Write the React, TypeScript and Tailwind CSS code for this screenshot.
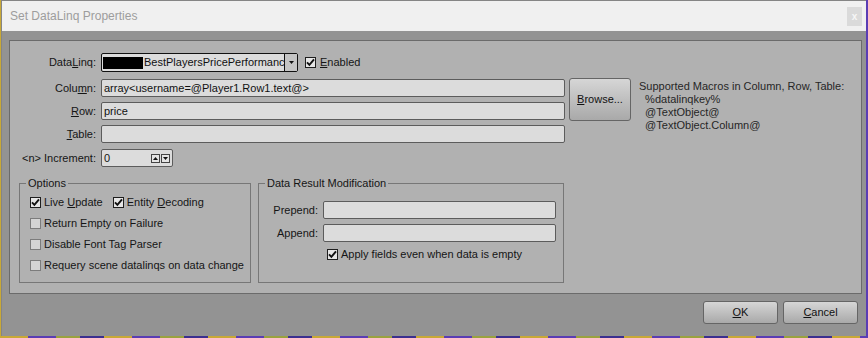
import type { ReactNode } from "react";

const font = { fontFamily: '"Liberation Sans", Arial, sans-serif' };

function Check({ checked }: { checked?: boolean }) {
  return (
    <span
      className={
        checked
          ? "w-[11px] h-[11px] shrink-0 border border-[#1e1e1e] bg-[#e6e6e6] flex items-center justify-center"
          : "w-[11px] h-[11px] shrink-0 border border-[#7c7c7c] bg-[#d4d4d4]"
      }
    >
      {checked && (
        <svg width="9" height="9" viewBox="0 0 9 9">
          <path d="M1 4.3 L3.4 6.8 L8 1.4" stroke="#111" strokeWidth="1.9" fill="none" />
        </svg>
      )}
    </span>
  );
}

function CheckRow({ checked, children }: { checked?: boolean; children: ReactNode }) {
  return (
    <div className="flex items-center gap-[3px] h-[21px]">
      <Check checked={checked} />
      <span>{children}</span>
    </div>
  );
}

function Field({ value, w }: { value?: string; w: string }) {
  return (
    <div
      className={`${w} h-[18px] bg-[#dcdcdc] border border-[#5c5c5c] rounded-[2px] px-[2px] flex items-center text-[#111]`}
    >
      {value}
    </div>
  );
}

function Label({ children, w }: { children: ReactNode; w: string }) {
  return <div className={`${w} text-right shrink-0`}>{children}</div>;
}

function Btn({ children, w, h }: { children: ReactNode; w: string; h: string }) {
  return (
    <button
      className={`${w} ${h} border border-[#656565] rounded-[3px] bg-gradient-to-b from-[#d6d6d6] to-[#a9a9a9] text-[#111] flex items-center justify-center`}
    >
      {children}
    </button>
  );
}

export default function App() {
  return (
    <div
      className="w-[868px] h-[338px] pl-[1px] bg-[repeating-linear-gradient(90deg,#c9a936_0px,#c9a936_28px,#5a3db4_28px,#5a3db4_56px,#9aa23f_56px,#9aa23f_80px,#3b2f8f_80px,#3b2f8f_104px)] overflow-hidden"
      style={font}
    >
      <div className="w-[865px] h-[336px] bg-[#939393] border-l border-t border-[#858585] flex flex-col text-[11px] text-[#151515]">
        {/* title bar */}
        <div className="h-[30px] bg-[#f0f0f0] flex items-center justify-between pl-[8px] pr-[4px]">
          <span className="text-[12px] text-[#9d9d9d]">Set DataLinq Properties</span>
          <div className="w-[15px] h-[19px] bg-[#dadada] flex items-center justify-center text-[#f6f6f6] text-[10px] font-bold">
            x
          </div>
        </div>

        <div className="flex-1 flex flex-col pl-[7px] pr-[4px] pt-[9px]">
          {/* main panel */}
          <div className="h-[254px] bg-[#b1b1b1] border border-[#6b6b6b] pt-[12px]">
            <div className="flex items-center h-[19px]">
              <Label w="w-[86px]">
                Data<span className="underline">L</span>inq:
              </Label>
              <div className="ml-[5px] w-[197px] h-[19px] bg-[#dcdcdc] border border-[#111] rounded-[2px] flex items-center">
                <div className="ml-[1px] w-[40px] h-[12px] bg-black" />
                <span className="ml-[1px] flex-1 overflow-hidden whitespace-nowrap text-[#111]">
                  BestPlayersPricePerformanc
                </span>
                <div className="w-[13px] h-full border-l border-[#111] bg-[#c4c4c4] flex items-center justify-center">
                  <svg width="7" height="4" viewBox="0 0 7 4">
                    <path d="M1 0 L6 0 L3.5 3 Z" fill="#111" />
                  </svg>
                </div>
              </div>
              <div className="ml-[7px] flex items-center gap-[4px]">
                <Check checked />
                <span>
                  <span className="underline">E</span>nabled
                </span>
              </div>
            </div>

            <div className="flex mt-[6px]">
              <div className="flex flex-col mt-[1px]">
                <div className="flex items-center gap-[5px]">
                  <Label w="w-[86px]">
                    Colu<span className="underline">m</span>n:
                  </Label>
                  <Field w="w-[464px]" value="array<username=@Player1.Row1.text@>" />
                </div>
                <div className="flex items-center gap-[5px] mt-[5px]">
                  <Label w="w-[86px]">
                    <span className="underline">R</span>ow:
                  </Label>
                  <Field w="w-[464px]" value="price" />
                </div>
                <div className="flex items-center gap-[5px] mt-[5px]">
                  <Label w="w-[86px]">
                    <span className="underline">T</span>able:
                  </Label>
                  <Field w="w-[464px]" />
                </div>
                <div className="flex items-center gap-[5px] mt-[6px]">
                  <Label w="w-[86px]">&lt;n&gt; Increment:</Label>
                  <div className="w-[72px] h-[18px] bg-[#dcdcdc] border border-[#5c5c5c] rounded-[2px] flex items-center pl-[2px]">
                    <span className="flex-1">0</span>
                    <div className="flex gap-[1px] mr-[2px]">
                      <div className="w-[9px] h-[9px] border border-[#444] bg-[#e4e4e4] flex items-center justify-center">
                        <svg width="5" height="3" viewBox="0 0 5 3">
                          <path d="M0 3 L5 3 L2.5 0 Z" fill="#111" />
                        </svg>
                      </div>
                      <div className="w-[9px] h-[9px] border border-[#444] bg-[#e4e4e4] flex items-center justify-center">
                        <svg width="5" height="3" viewBox="0 0 5 3">
                          <path d="M0 0 L5 0 L2.5 3 Z" fill="#111" />
                        </svg>
                      </div>
                    </div>
                  </div>
                </div>
              </div>

              <div className="ml-[4px]">
                <Btn w="w-[62px]" h="h-[43px]">
                  <span>
                    <span className="underline">B</span>rowse...
                  </span>
                </Btn>
              </div>

              <div className="ml-[8px] mt-[2px] leading-[13px] text-[#262626] whitespace-pre">
                <div>Supported Macros in Column, Row, Table:</div>
                <div>{"  %datalinqkey%"}</div>
                <div>{"  @TextObject@"}</div>
                <div>{"  @TextObject.Column@"}</div>
              </div>
            </div>

            {/* group boxes */}
            <div className="flex gap-[7px] ml-[9px] mt-[9px]">
              <fieldset className="w-[232px] h-[107px] border border-[#777] pl-[10px]">
                <legend className="ml-[-4px] px-[2px] leading-[14px]">Options</legend>
                <div className="mt-[2px]">
                  <div className="flex items-center h-[21px]">
                    <Check checked />
                    <span className="ml-[3px]">
                      Live <span className="underline">U</span>pdate
                    </span>
                    <span className="ml-[10px]">
                      <Check checked />
                    </span>
                    <span className="ml-[3px]">
                      Entity <span className="underline">D</span>ecoding
                    </span>
                  </div>
                  <CheckRow>Return Empty on Failure</CheckRow>
                  <CheckRow>Disable Font Tag Parser</CheckRow>
                  <CheckRow>Requery scene datalinqs on data change</CheckRow>
                </div>
              </fieldset>

              <fieldset className="w-[306px] h-[107px] border border-[#777] pl-[8px]">
                <legend className="ml-[-2px] px-[2px] leading-[14px]">Data Result Modification</legend>
                <div className="mt-[11px] flex items-center gap-[5px]">
                  <Label w="w-[51px]">Prepend:</Label>
                  <Field w="w-[233px]" />
                </div>
                <div className="mt-[5px] flex items-center gap-[5px]">
                  <Label w="w-[51px]">Append:</Label>
                  <Field w="w-[233px]" />
                </div>
                <div className="ml-[60px] mt-[2px]">
                  <CheckRow checked>Apply fields even when data is empty</CheckRow>
                </div>
              </fieldset>
            </div>
          </div>

          {/* footer buttons */}
          <div className="flex justify-end gap-[5px] mt-[7px] pr-[4px]">
            <Btn w="w-[75px]" h="h-[23px]">
              <span>
                <span className="underline">O</span>K
              </span>
            </Btn>
            <Btn w="w-[75px]" h="h-[23px]">
              <span>
                <span className="underline">C</span>ancel
              </span>
            </Btn>
          </div>
        </div>
      </div>
    </div>
  );
}
